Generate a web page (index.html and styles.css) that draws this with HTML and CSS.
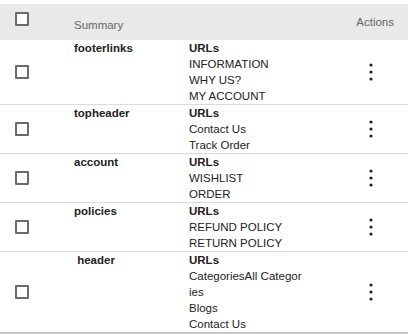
FILE: index.html
```html
<!DOCTYPE html>
<html lang="en">
<head>
    <meta charset="UTF-8">
    <meta name="viewport" content="width=device-width, initial-scale=1.0">
    <title>Menus</title>
    <link rel="stylesheet" href="styles.css">
</head>
<body>
    <table class="menu-table">
        <colgroup>
            <col class="col-check">
            <col class="col-name">
            <col class="col-urls">
            <col class="col-actions">
        </colgroup>
        <thead>
            <tr>
                <th class="head-check"><input type="checkbox" class="check"></th>
                <th class="head-summary">Summary</th>
                <th></th>
                <th class="head-actions">Actions</th>
            </tr>
        </thead>
        <tbody>
            <tr>
                <td class="cell-check"><input type="checkbox" class="check"></td>
                <td class="cell-name">footerlinks</td>
                <td class="cell-urls">
                    <strong>URLs</strong>
                    <div>INFORMATION</div>
                    <div>WHY US?</div>
                    <div>MY ACCOUNT</div>
                </td>
                <td class="cell-actions"><button class="kebab"><svg width="4" height="18" viewBox="0 0 4 18"><circle cx="2" cy="2" r="1.6"/><circle cx="2" cy="9" r="1.6"/><circle cx="2" cy="16" r="1.6"/></svg></button></td>
            </tr>
            <tr>
                <td class="cell-check"><input type="checkbox" class="check"></td>
                <td class="cell-name">topheader</td>
                <td class="cell-urls">
                    <strong>URLs</strong>
                    <div>Contact Us</div>
                    <div>Track Order</div>
                </td>
                <td class="cell-actions"><button class="kebab"><svg width="4" height="18" viewBox="0 0 4 18"><circle cx="2" cy="2" r="1.6"/><circle cx="2" cy="9" r="1.6"/><circle cx="2" cy="16" r="1.6"/></svg></button></td>
            </tr>
            <tr>
                <td class="cell-check"><input type="checkbox" class="check"></td>
                <td class="cell-name">account</td>
                <td class="cell-urls">
                    <strong>URLs</strong>
                    <div>WISHLIST</div>
                    <div>ORDER</div>
                </td>
                <td class="cell-actions"><button class="kebab"><svg width="4" height="18" viewBox="0 0 4 18"><circle cx="2" cy="2" r="1.6"/><circle cx="2" cy="9" r="1.6"/><circle cx="2" cy="16" r="1.6"/></svg></button></td>
            </tr>
            <tr>
                <td class="cell-check"><input type="checkbox" class="check"></td>
                <td class="cell-name">policies</td>
                <td class="cell-urls">
                    <strong>URLs</strong>
                    <div>REFUND POLICY</div>
                    <div>RETURN POLICY</div>
                </td>
                <td class="cell-actions"><button class="kebab"><svg width="4" height="18" viewBox="0 0 4 18"><circle cx="2" cy="2" r="1.6"/><circle cx="2" cy="9" r="1.6"/><circle cx="2" cy="16" r="1.6"/></svg></button></td>
            </tr>
            <tr>
                <td class="cell-check"><input type="checkbox" class="check"></td>
                <td class="cell-name">&nbsp;header</td>
                <td class="cell-urls">
                    <strong>URLs</strong>
                    <div>CategoriesAll Categories</div>
                    <div>Blogs</div>
                    <div>Contact Us</div>
                </td>
                <td class="cell-actions"><button class="kebab"><svg width="4" height="18" viewBox="0 0 4 18"><circle cx="2" cy="2" r="1.6"/><circle cx="2" cy="9" r="1.6"/><circle cx="2" cy="16" r="1.6"/></svg></button></td>
            </tr>
        </tbody>
    </table>
</body>
</html>
```

FILE: styles.css
```css
:root {
    --text-color: #222;
    --muted-color: #666;
    --head-bg: #e9e9e9;
    --border-color: #dcdcdc;
}

* {
    margin: 0;
    padding: 0;
    box-sizing: border-box;
}

body {
    font-family: "Liberation Sans", Arial, sans-serif;
    font-size: 11.5px;
    line-height: 16px;
    color: var(--text-color);
    background-color: #fff;
    padding-top: 4px;
}

.menu-table {
    width: 100%;
    border-collapse: collapse;
    table-layout: fixed;
    border-bottom: 2px solid #c6c6c6;
}

.col-check { width: 74px; }
.col-name { width: 115px; }
.col-urls { width: 116px; }

.menu-table thead tr {
    background-color: var(--head-bg);
    height: 36px;
}

.menu-table th {
    font-weight: normal;
    color: var(--muted-color);
    text-align: left;
    vertical-align: top;
}

.head-check {
    padding: 8px 0 0 15px;
}

.head-summary {
    padding-top: 13px;
}

.menu-table .head-actions {
    padding: 10px 14px 0 0;
    text-align: right;
}

.menu-table tbody tr + tr td {
    border-top: 1px solid var(--border-color);
}

.menu-table td {
    vertical-align: top;
}

.menu-table .cell-check {
    padding-left: 15px;
    vertical-align: middle;
}

.check {
    appearance: none;
    -webkit-appearance: none;
    display: block;
    width: 14px;
    height: 14px;
    border: 2px solid #6b6b6b;
    border-radius: 1px;
    background: #fff;
    margin: 0;
}

.cell-name {
    font-weight: bold;
}

.cell-urls {
    padding-right: 2px;
    word-break: break-all;
}

.cell-urls strong {
    display: block;
}

.menu-table .cell-actions {
    vertical-align: middle;
    padding-left: 64px;
}

.kebab {
    display: block;
    border: none;
    background: none;
    width: 4px;
    height: 18px;
    fill: var(--text-color);
    cursor: pointer;
}

.kebab svg {
    display: block;
}
```
